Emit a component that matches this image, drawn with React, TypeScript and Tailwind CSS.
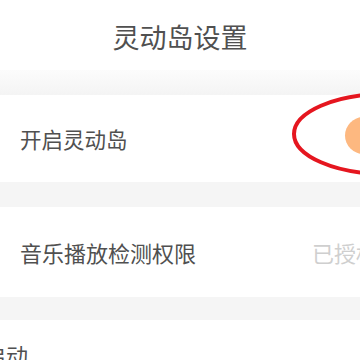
import React from 'react';

const cjk = { fontFamily: '"Noto Sans CJK SC", "Noto Sans", sans-serif' };

export default function App() {
  return (
    <div className="relative w-[360px] h-[360px] overflow-hidden bg-white" style={cjk}>
      {/* Header */}
      <div className="h-[70px] flex items-center justify-center bg-white">
        <h1 className="text-[27px] leading-none text-[#505050] pt-[2px]">灵动岛设置</h1>
      </div>
      <div className="h-[25px] bg-gradient-to-b from-[#fcfcfc] to-[#f4f4f4]"></div>

      {/* Toggle row */}
      <div className="h-[87px] flex items-center justify-between pl-5 bg-white">
        <span className="text-[21.5px] leading-none text-[#505050]">开启灵动岛</span>
        <div className="w-[37px] h-[37px] rounded-full bg-[#fdb880] mr-[-22px] mt-[-6px]"></div>
      </div>
      <div className="h-[25px] bg-[#f5f5f5]"></div>

      {/* Permission row */}
      <div className="h-[90px] flex items-center justify-between pl-5 bg-white">
        <span className="text-[22px] leading-none text-[#505050]">音乐播放检测权限</span>
        <span className="shrink-0 text-[22px] leading-none text-[#cfcfcf] whitespace-nowrap mr-[-18px]">已授权</span>
      </div>
      <div className="h-[23px] bg-[#f5f5f5]"></div>

      {/* Next row, partly visible */}
      <div className="h-[87px] pt-[23px] bg-white">
        <span className="block text-[22px] leading-[22px] text-[#505050] ml-[-16px] whitespace-nowrap">启动</span>
      </div>

      {/* Red annotation ellipse */}
      <svg className="absolute left-0 top-0 pointer-events-none" width="360" height="360" viewBox="0 0 360 360">
        <ellipse cx="386" cy="134" rx="92" ry="40" fill="none" stroke="#e5161f" strokeWidth="4" />
      </svg>
    </div>
  );
}
